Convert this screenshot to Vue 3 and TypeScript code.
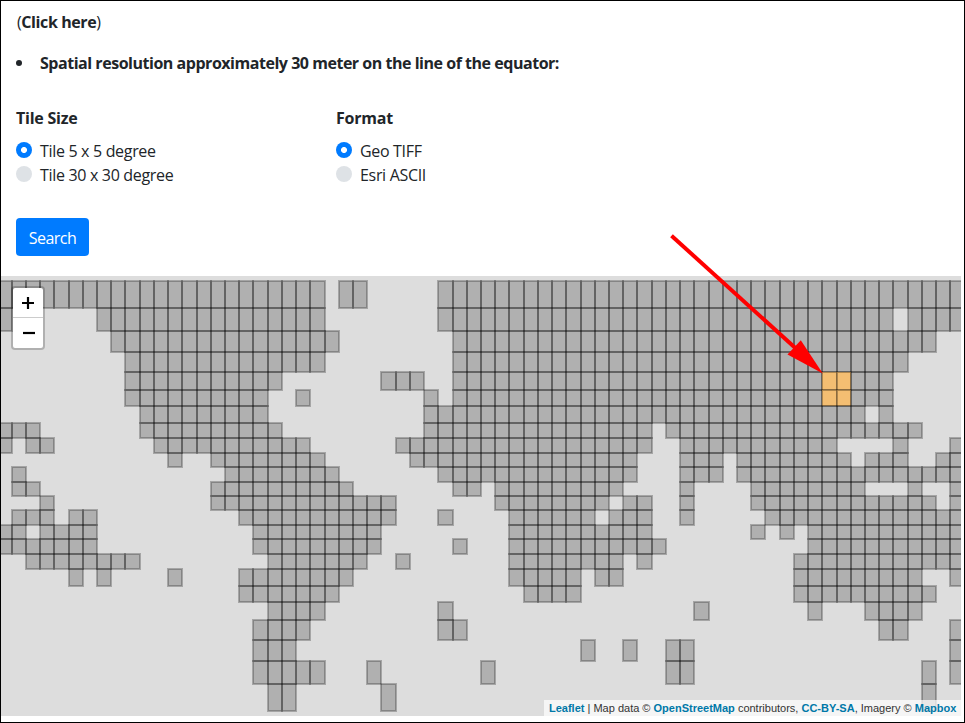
<script setup lang="ts">
import { ref } from 'vue'

interface Tile {
  x: number
  y: number
  w: number
  h: number
  selected: boolean
}

const tileSize = ref('5')
const format = ref('tiff')

// Latitude edges of the 5 degree grid, in map pixels.
const latEdges = [
  281, 308, 331, 352, 372, 390, 406, 423, 438, 453, 467, 482, 496,
  510, 525, 539, 554, 569, 586, 602, 620, 640, 661, 684, 711,
].map((y) => y - 276)

// Inclusive column ranges that hold land tiles, one list per latitude band.
const bands: number[][][] = [
  [[-1, 21], [23, 24], [30, 66]],
  [[-1, -1], [6, 21], [30, 61], [63, 66]],
  [[7, 22], [31, 64]],
  [[8, 21], [31, 62]],
  [[8, 18], [26, 28], [31, 61]],
  [[8, 17], [20, 20], [29, 29], [31, 61]],
  [[9, 17], [29, 59], [61, 61]],
  [[-1, 1], [9, 18], [29, 44], [46, 63]],
  [[-1, -1], [1, 2], [10, 20], [27, 44], [47, 57], [62, 62], [66, 66]],
  [[11, 11], [14, 21], [28, 43], [47, 49], [51, 58], [60, 62], [65, 66]],
  [[0, 0], [15, 22], [30, 43], [47, 49], [51, 66]],
  [[0, 1], [14, 23], [31, 32], [34, 42], [47, 47], [52, 59], [63, 63], [66, 66]],
  [[2, 2], [14, 26], [34, 41], [43, 44], [47, 47], [52, 64], [66, 66]],
  [[0, 2], [4, 5], [16, 26], [30, 30], [35, 40], [42, 44], [47, 47], [53, 66]],
  [[-1, 0], [2, 5], [17, 25], [35, 44], [52, 52], [54, 54], [56, 66]],
  [[-1, 5], [17, 25], [31, 31], [35, 45], [56, 66]],
  [[1, 8], [18, 24], [27, 27], [35, 42], [44, 44], [55, 66]],
  [[4, 4], [6, 6], [11, 11], [16, 23], [35, 39], [41, 42], [55, 63], [66, 66]],
  [[16, 22], [36, 39], [55, 64]],
  [[18, 21], [30, 30], [48, 48], [56, 56], [60, 63]],
  [[17, 20], [30, 31], [61, 62], [66, 66]],
  [[17, 19], [40, 40], [43, 43], [46, 47], [66, 66]],
  [[17, 21], [25, 25], [33, 33], [46, 47], [64, 64], [66, 66]],
  [[18, 19], [26, 26], [64, 64]],
]

const lonEdge = (k: number): number => Math.floor(12.15 + (k * 128) / 9) - 1

const tiles: Tile[] = []
bands.forEach((ranges, row) => {
  for (const [from, to] of ranges) {
    for (let k = from; k <= to; k++) {
      tiles.push({
        x: lonEdge(k),
        y: latEdges[row],
        w: lonEdge(k + 1) - lonEdge(k),
        h: latEdges[row + 1] - latEdges[row],
        selected: (row === 4 || row === 5) && (k === 57 || k === 58),
      })
    }
  }
})
</script>

<template>
  <main class="page">
    <section class="content">
      <p class="link-line">(<b>Click here</b>)</p>
      <ul class="notes">
        <li><span class="note">Spatial resolution approximately 30 meter on the line of the equator:</span></li>
      </ul>
      <form class="form" @submit.prevent>
        <div class="groups">
          <fieldset class="group">
            <legend>Tile Size</legend>
            <label><input v-model="tileSize" type="radio" name="size" value="5" /><span>Tile 5 x 5 degree</span></label>
            <label><input v-model="tileSize" type="radio" name="size" value="30" /><span>Tile 30 x 30 degree</span></label>
          </fieldset>
          <fieldset class="group">
            <legend>Format</legend>
            <label><input v-model="format" type="radio" name="format" value="tiff" /><span>Geo TIFF</span></label>
            <label><input v-model="format" type="radio" name="format" value="ascii" /><span>Esri ASCII</span></label>
          </fieldset>
        </div>
        <button class="search" type="submit">Search</button>
      </form>
    </section>

    <section class="map">
      <svg class="tiles" width="960" height="440" viewBox="0 0 960 440">
        <rect
          v-for="(t, i) in tiles"
          :key="i"
          :class="['tile', { selected: t.selected }]"
          :x="t.x"
          :y="t.y"
          :width="t.w"
          :height="t.h"
        />
      </svg>
      <div class="zoom">
        <button type="button" aria-label="Zoom in">
          <svg width="14" height="12" viewBox="0 0 14 12"><path d="M1 6H13M7 0V12" /></svg>
        </button>
        <button type="button" aria-label="Zoom out">
          <svg width="14" height="12" viewBox="0 0 14 12"><path d="M2 6H14" /></svg>
        </button>
      </div>
      <div class="attribution">
        <a>Leaflet</a> | Map data © <a>OpenStreetMap</a> contributors, <a>CC-BY-SA</a>, Imagery © <a>Mapbox</a>
      </div>
    </section>

    <svg class="arrow" width="160" height="146" viewBox="664 230 160 146">
      <path class="shaft" d="M671.5 235.7L797 349.5" />
      <path class="head" d="M822.8 373.4L800.8 340.3L787.5 354.4Z" />
    </svg>
  </main>
</template>

<style>
body {
  margin: 0;
  background: #fff;
}
</style>

<style scoped>
.page {
  position: relative;
  box-sizing: border-box;
  width: 965px;
  height: 723px;
  border: 1px solid #000;
  background: #fff;
  color: #212529;
  font: 16px/24px "Open Sans", "Noto Sans", sans-serif;
  overflow: hidden;
}
.content {
  box-sizing: border-box;
  height: 275px;
  padding: 9px 15px 0;
  white-space: nowrap;
}
.link-line {
  margin: 0 0 16px;
  padding: 1px 0 0 1px;
  line-height: 23px;
  letter-spacing: -0.4px;
}
.notes {
  margin: 0;
  padding: 0;
  list-style: none;
}
.notes li {
  display: flex;
  align-items: center;
  gap: 18px;
  height: 24px;
  font-weight: 700;
}
.notes li::before {
  content: "";
  width: 6px;
  height: 6px;
  margin-top: 2px;
  border-radius: 50%;
  background: #212529;
}
.note {
  padding-top: 1px;
  letter-spacing: -0.47px;
}
.form {
  margin-top: 32px;
}
.groups {
  display: flex;
}
.group {
  width: 320px;
  margin: 0;
  padding: 0;
  border: 0;
}
legend {
  padding: 1px 0 0;
  margin-bottom: 8px;
  font-weight: 700;
  line-height: 23px;
  letter-spacing: -0.24px;
}
label {
  display: flex;
  align-items: center;
  gap: 8px;
  height: 24px;
  letter-spacing: -0.32px;
}
label span {
  padding-top: 1px;
}
input {
  appearance: none;
  width: 16px;
  height: 16px;
  margin: 0;
  border-radius: 50%;
  background: #dee2e6;
}
input:checked {
  background: radial-gradient(circle, #fff 2.6px, #007bff 3.4px);
}
.search {
  width: 73px;
  height: 38px;
  margin-top: 32px;
  padding: 1px 0 0;
  border: 0;
  border-radius: 4px;
  background: #007bff;
  color: #fff;
  font: inherit;
  letter-spacing: -0.5px;
}
.map {
  position: relative;
  width: 960px;
  height: 440px;
  background: #ddd;
  overflow: hidden;
}
.tiles {
  display: block;
}
.tile {
  fill: #000;
  fill-opacity: 0.2;
  stroke: #000;
  stroke-opacity: 0.25;
  stroke-width: 2px;
}
.tile.selected {
  fill: #fab658;
  fill-opacity: 0.8;
}
.zoom {
  position: absolute;
  top: 10px;
  left: 10px;
  display: flex;
  flex-direction: column;
  border: 2px solid rgba(0, 0, 0, 0.2);
  border-radius: 4px;
  background: #fff;
  background-clip: padding-box;
}
.zoom button {
  display: flex;
  align-items: center;
  justify-content: center;
  width: 30px;
  height: 30px;
  padding: 0;
  border: 0;
  background: none;
}
.zoom button:first-child {
  border-bottom: 1px solid #ccc;
}
.zoom path {
  fill: none;
  stroke: #000;
  stroke-width: 2.2px;
}
.attribution {
  position: absolute;
  right: 0;
  bottom: 0;
  width: 407px;
  height: 16px;
  padding: 0 5px;
  background: rgba(255, 255, 255, 0.7);
  color: #333;
  font: 11px/17px "Liberation Sans", Arial, sans-serif;
  white-space: nowrap;
}
.attribution a {
  color: #0078a8;
  font-weight: 700;
}
.arrow {
  position: absolute;
  left: 663px;
  top: 229px;
}
.shaft {
  fill: none;
  stroke: #f00;
  stroke-width: 4px;
}
.head {
  fill: #f00;
}
</style>
